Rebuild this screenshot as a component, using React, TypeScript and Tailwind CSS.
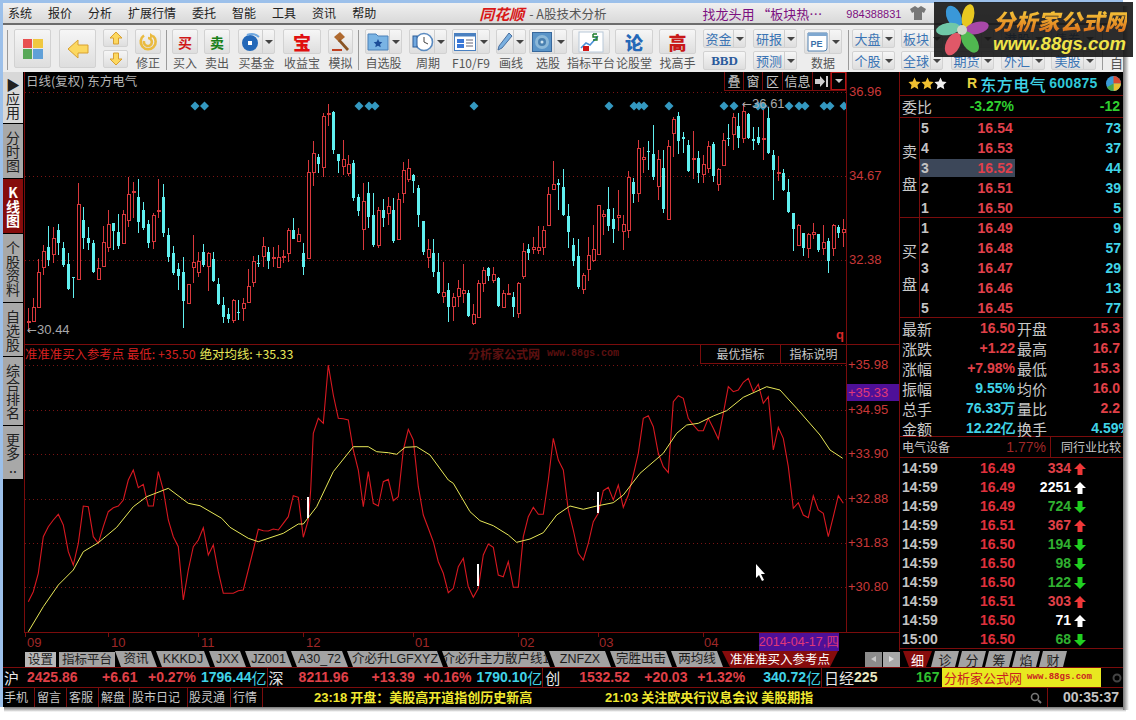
import type { ReactNode } from 'react'

// y values are taken at 3x, x is fixed at 5px per bar: [red?, high, bodyTop, bodyBottom, low]
const candles: number[][] = [
  [1,715,752,756,785],[1,685,712,752,755],[1,568,606,710,712],[1,525,543,590,615],[0,468,532,570,588],[1,470,505,552,580],[0,462,480,518,555],[0,515,535,585,590],[0,550,582,658,660],[0,620,622,625,684],
  [1,340,403,626,628],[0,410,450,505,537],[0,470,505,518,540],[0,510,518,605,610],[1,565,595,628,630],[1,468,517,587,590],[1,420,462,530,545],[0,460,460,482,540],[0,432,487,528,538],[1,420,432,518,520],
  [1,322,373,450,470],[1,335,362,366,445],[0,328,382,455,490],[0,397,420,475,480],[0,450,462,518,535],[1,428,435,512,537],[1,328,420,423,445],[0,343,382,488,500],[0,475,495,560,575],[0,527,550,608,615],
  [0,580,598,618,660],[0,560,606,692,775],[1,642,642,698,700],[1,495,577,590,640],[1,545,572,605,620],[0,522,547,585,590],[1,545,550,587,662],[0,545,568,633,635],[0,625,642,702,705],[0,680,706,740,758],
  [0,715,732,746,758],[1,688,690,750,758],[0,690,725,727,750],[1,685,700,715,752],[1,598,648,695,697],[1,558,573,635,652],[0,555,578,580,590],[1,502,528,557,590],[0,530,545,572,598],[1,530,560,562,590],
  [1,525,562,592,595],[1,540,558,560,578],[1,475,480,548,575],[0,445,480,506,508],[1,475,492,513,515],[0,520,549,590,614],[1,270,306,565,568],[1,212,250,305,347],[0,252,262,282,308],[1,130,138,290,322],
  [1,102,130,133,168],[0,122,125,240,252],[0,252,252,272,308],[1,210,267,288,315],[1,255,282,310,318],[0,270,280,385,392],[0,372,382,422,437],[1,340,393,476,540],[0,337,370,440,475],[0,370,435,525,530],
  [1,410,420,525,535],[0,388,420,443,470],[1,382,408,428,465],[0,385,420,512,520],[1,370,388,507,510],[1,276,300,368,398],[1,268,295,328,335],[0,313,315,332,368],[0,345,353,435,470],[0,453,454,545,555],
  [1,508,538,560,595],[0,508,548,606,620],[0,550,606,668,672],[1,575,666,678,700],[0,640,660,710,755],
  [1,670,680,708,752],[1,630,655,678,712],[1,583,660,668,700],[0,660,670,738,740],[1,703,733,760,766],[1,630,640,740,742],[1,590,600,638,665],[0,590,595,618,632],[1,590,613,630,640],[0,622,625,708,710],
  [1,660,670,712,714],[1,642,670,672,675],[0,665,682,710,740],[1,635,638,728,743],[1,518,542,618,626],[0,522,538,548,570],[1,500,532,538,552],[1,468,532,540,552],[1,468,480,530,555],[1,350,373,464,466],
  [1,272,342,358,360],[0,328,340,346,420],[0,297,352,435,437],[0,402,438,485,535],[0,505,525,572,588],[0,507,558,652,656],[1,610,615,656,672],[1,500,556,596,632],[1,465,538,570,575],[1,405,405,553,555],
  [1,420,432,437,495],[0,352,418,468,482],[0,415,447,476,518],[1,360,436,442,482],[1,435,463,482,540],[1,302,320,480,503],[0,325,336,372,400],[1,210,235,370,395],[1,232,260,268,310],[0,213,243,245,300],
  [0,165,252,322,330],[1,240,268,347,390],[0,240,293,417,428],[1,210,228,447,450],[1,140,148,190,262],[0,125,138,212,252],[0,187,202,208,250],[0,210,225,302,306],[1,183,265,268,328],[0,243,265,310,338],
  [1,255,282,312,338],[1,212,228,295,310],[0,215,222,318,335],[1,295,297,343,362],[1,190,210,284,286],[0,163,203,205,228],[1,130,140,192,240],[0,130,168,203,235],[1,100,123,203,218],[0,130,133,205,208],
  [0,170,208,214,240],[0,172,202,218,225],[1,110,205,208,270],[0,110,145,250,252],[0,240,255,300,390],[1,258,305,310,332],[0,297,310,360,362],[0,328,366,425,428],[0,430,430,478,542],[1,462,465,524,526],
  [0,490,490,533,558],[1,490,492,533,563],[1,460,487,491,506],[0,492,492,540,545],[1,465,515,535,555],[0,503,513,572,610],[1,462,464,535,557],[0,465,472,488,505],[1,447,478,485,530],
]

const diamonds = [195, 204.5, 359, 369, 375, 474, 609, 634, 639, 644, 669, 724, 734, 758, 763, 789, 799, 805, 824, 830, 844]

const redA = [85,785,100,755,115,700,130,590,145,560,160,540,175,523,190,555,205,635,220,675,235,610,250,498,265,500,280,590,295,610,310,560,325,515,340,503,355,498,370,480,385,420,400,390,415,443,430,433,445,498,460,498,475,395,490,450,505,540,520,590,535,620,550,780,565,690,580,620,595,600,610,563,625,645,640,615,655,695,670,760,685,760,700,760,715,752,730,750,745,690,760,630,775,568,790,572,805,573,820,567,835,570,850,550,865,530,880,467,895,472,910,592,925,540,932,450,940,280,955,235,970,250,985,75,1000,165,1015,235,1030,236,1045,240,1060,330,1075,390,1090,500,1105,395,1120,490,1135,498,1150,425,1165,418,1180,482,1195,470,1210,330,1225,268,1240,300,1255,440,1270,525,1285,565,1300,605,1315,665,1330,700,1345,758]
const redB = [10,745,25,680,40,655,55,740,70,772,85,745,100,645,115,612,130,622,145,705,160,710,175,665,190,742,205,742,220,590,235,530,250,502,265,523,280,523,295,420,310,295,325,360,340,390,355,510,370,570,385,640,400,660,415,610,430,545,445,520,460,452,475,442,490,480,505,435,520,502,535,465,550,405,565,340,580,235,595,227,610,260,625,340,640,380,655,398,670,185,685,167,700,175,715,235,730,255,745,272,760,272,775,235,790,265,805,297,820,220,835,140,850,155,865,150,880,127,895,115,910,155,925,133,940,190,955,170,970,330,985,262,1000,295,1015,380,1030,505,1045,488,1060,525,1075,533,1090,467,1105,510,1120,520,1135,590,1150,530,1165,467,1180,490]
const yellowA = [85,875,130,800,175,735,220,690,250,635,295,608,350,562,400,500,440,470,505,445,565,490,600,497,665,535,690,562,745,595,775,605,850,580,895,552,910,552,950,500,1000,395,1060,320,1105,320,1130,335,1165,338,1190,343,1215,322,1250,320,1290,345,1345,420]
const yellowB = [10,430,60,515,90,542,130,557,175,585,200,607,240,597,280,578,320,525,360,498,400,508,440,498,490,488,520,465,570,400,640,340,680,280,710,255,745,250,790,228,830,212,880,172,950,140,990,150,1040,205,1110,285,1140,330,1178,355]

function toPoints(a: number[], b: number[]) {
  const out: string[] = []
  for (let i = 0; i < a.length; i += 2) out.push(`${(a[i] / 3).toFixed(1)},${(340 + a[i + 1] / 3).toFixed(1)}`)
  for (let i = 0; i < b.length; i += 2) out.push(`${(450 + b[i] / 3).toFixed(1)},${(340 + b[i + 1] / 3).toFixed(1)}`)
  return out.join(' ')
}

const cjk = "font-['Noto_Sans_CJK_SC',sans-serif]"
const num = "font-['Liberation_Sans',sans-serif] font-bold text-[14px]"
const tabFont = "font-['Liberation_Sans','Noto_Sans_CJK_SC',sans-serif] text-[12.5px]"

function Handle({ className }: { className: string }) {
  return <div className={`h-[40px] w-[2px] mt-[1px] shrink-0 border-l border-[#9a9a9a] border-r-white ${className}`} />
}

function IconBox({ children, dropdown, className = '' }: { children: ReactNode; dropdown?: boolean; className?: string }) {
  return (
    <div className={`flex w-full items-center rounded-[2px] border border-[#d2d2d2] bg-gradient-to-b from-[#f6f6f6] to-[#dedede] ${className}`}>
      <div className="flex h-full flex-1 items-center justify-center">{children}</div>
      {dropdown && (
        <div className="flex h-full w-[12px] shrink-0 items-center justify-center border-l border-[#cfcfcf]">
          <div className="h-0 w-0 border-x-[4px] border-t-[4px] border-x-transparent border-t-[#444]" />
        </div>
      )}
    </div>
  )
}

function ToolBtn({ className, label, children, dropdown }: { className: string; label: string; children: ReactNode; dropdown?: boolean }) {
  return (
    <div className={`flex shrink-0 flex-col items-center ${className}`}>
      <IconBox dropdown={dropdown} className="h-[25px]">{children}</IconBox>
      <div className="mt-[1px] whitespace-nowrap text-[12px] leading-[16px] text-[#555]">{label}</div>
    </div>
  )
}

function SmallBtn({ text, dropdown = true }: { text: string; dropdown?: boolean }) {
  return (
    <IconBox dropdown={dropdown} className="h-[19px]">
      <span className="whitespace-nowrap text-[13px] leading-none text-[#3a74b4]">{text}</span>
    </IconBox>
  )
}

function SmallCol({ className, top, bottom }: { className: string; top: string; bottom: string }) {
  return (
    <div className={`flex shrink-0 flex-col gap-[3px] ${className}`}>
      <SmallBtn text={top} />
      <SmallBtn text={bottom} />
    </div>
  )
}

function SideTab({ chars, className }: { chars: string[]; className: string }) {
  return (
    <div className={`mb-[1px] flex w-[20px] flex-col items-center justify-center text-[14px] leading-[14px] ${className}`}>
      {chars.map((c, i) => (
        <span key={i}>{c}</span>
      ))}
    </div>
  )
}

function BottomTab({ text, className }: { text: string; className: string }) {
  return (
    <div className={`flex h-[16px] shrink-0 items-center justify-center whitespace-nowrap bg-[#a3a3a3] leading-none text-[#1c1c1c] [clip-path:polygon(0_0,calc(100%-6px)_0,100%_100%,6px_100%)] ${tabFont} ${className}`}>
      {text}
    </div>
  )
}

function ArrowMark({ up, color }: { up: boolean; color: string }) {
  return (
    <svg width="12" height="12" viewBox="0 0 12 12" className="ml-[3px] shrink-0">
      <path d={up ? 'M6 0L12 6H8.5V12H3.5V6H0Z' : 'M6 12L12 6H8.5V0H3.5V6H0Z'} fill={color} />
    </svg>
  )
}

function Star({ color }: { color: string }) {
  return (
    <svg width="13" height="13" viewBox="0 0 24 24">
      <path d="M12 1l3.4 7.2 7.8 1-5.7 5.4 1.5 7.8L12 18.6 5 22.4l1.5-7.8L.8 9.2l7.8-1z" fill={color} />
    </svg>
  )
}

const sells = [
  ['5', '16.54', '73'],
  ['4', '16.53', '37'],
  ['3', '16.52', '44'],
  ['2', '16.51', '39'],
  ['1', '16.50', '5'],
]
const buys = [
  ['1', '16.49', '9'],
  ['2', '16.48', '57'],
  ['3', '16.47', '29'],
  ['4', '16.46', '13'],
  ['5', '16.45', '77'],
]

const stats = [
  ['最新', '16.50', 'text-[#e04048]', '开盘', '15.3', 'text-[#e04048]'],
  ['涨跌', '+1.22', 'text-[#e04048]', '最高', '16.7', 'text-[#e04048]'],
  ['涨幅', '+7.98%', 'text-[#e04048]', '最低', '15.3', 'text-[#e04048]'],
  ['振幅', '9.55%', 'text-[#40d4e8]', '均价', '16.0', 'text-[#e04048]'],
  ['总手', '76.33万', 'text-[#40d4e8]', '量比', '2.2', 'text-[#e04048]'],
  ['金额', '12.22亿', 'text-[#40d4e8]', '换手', '4.59%', 'text-[#40d4e8]'],
]

const ticks = [
  ['14:59', '16.49', '334', 'r'],
  ['14:59', '16.49', '2251', 'w'],
  ['14:59', '16.49', '724', 'g'],
  ['14:59', '16.51', '367', 'r'],
  ['14:59', '16.50', '194', 'g'],
  ['14:59', '16.50', '98', 'g'],
  ['14:59', '16.50', '122', 'g'],
  ['14:59', '16.51', '303', 'r'],
  ['14:59', '16.50', '71', 'w'],
  ['15:00', '16.50', '68', 'g'],
]

function DepthBlock({ label, rows, highlight }: { label: string[]; rows: string[][]; highlight?: number }) {
  return (
    <div className="flex h-[100px] border-b border-[#7a0c0c]">
      <div className="flex w-[20px] shrink-0 flex-col items-center justify-center gap-[17px] border-r border-[#7a0c0c] text-[15px] leading-[16px] text-[#c8c8c8]">
        {label.map((c) => (
          <span key={c}>{c}</span>
        ))}
      </div>
      <div className="flex flex-1 flex-col">
        {rows.map((r, i) => (
          <div key={i} className="flex h-[20px] items-center">
            <div className={`flex h-[18px] w-[95px] items-center justify-between pl-[1px] pr-[2px] ${i === highlight ? 'bg-[#3c4759]' : ''}`}>
              <span className={`${num} text-[#c4c4c4]`}>{r[0]}</span>
              <span className={`${num} tracking-[0.1px] text-[#e0404c]`}>{r[1]}</span>
            </div>
            <span className={`${num} ml-auto mr-[2px] text-[#40d4e8]`}>{r[2]}</span>
          </div>
        ))}
      </div>
    </div>
  )
}

export default function App() {
  return (
    <div className={`relative h-[720px] w-[1136px] overflow-hidden bg-white ${cjk}`}>
      <div className="relative flex h-[707px] w-[1123px] flex-col overflow-hidden border-l-[3px] border-t-[3px] border-[#9cc0ea] bg-black">
        {/* menu bar */}
        <div className="flex h-[22px] shrink-0 items-start border-b-2 border-[#6c6c6c] bg-gradient-to-b from-[#f0f0f0] to-[#d9d9d9] pl-[5px] pt-[2px]">
          <div className="flex gap-[16px] text-[12px] leading-[16px] text-[#222]">
            {['系统', '报价', '分析', '扩展行情', '委托', '智能', '工具', '资讯', '帮助'].map((m) => (
              <span key={m}>{m}</span>
            ))}
          </div>
          <div className="ml-[103px] text-[15px] font-bold italic leading-[17px] text-[#d81818]">同花顺</div>
          <div className="ml-[5px] text-[12.5px] leading-[17px] text-[#555]">- A股技术分析</div>
          <div className="ml-[96px] text-[13px] leading-[17px] text-[#7c1080]">找龙头用 “板块热…</div>
          <div className="ml-[24px] font-['Liberation_Sans',sans-serif] text-[11px] leading-[18px] text-[#7c1080]">984388831</div>
          <svg width="16" height="14" viewBox="0 0 16 14" className="ml-[9px] mt-[1px]">
            <path d="M5 0L0 3l2 4 2-1v8h8V6l2 1 2-4-5-3-3 2z" fill="#777" />
          </svg>
        </div>

        {/* toolbar */}
        <div className="flex h-[47px] shrink-0 items-start overflow-hidden bg-[#ededed] pt-[4px]">
          <Handle className="ml-[4px]" />
          <div className="ml-[5px] flex h-[39px] w-[37px] shrink-0">
            <IconBox className="h-full">
              <div className="grid h-[20px] w-[20px] grid-cols-2 gap-px">
                <div className="bg-[#e85050]" />
                <div className="bg-[#f0c840]" />
                <div className="bg-[#58a858]" />
                <div className="bg-[#60a0d8]" />
              </div>
            </IconBox>
          </div>
          <div className="ml-[8px] flex h-[39px] w-[37px] shrink-0">
            <IconBox className="h-full">
              <svg width="22" height="20" viewBox="0 0 22 20">
                <path d="M1 10L11 1v5h10v8H11v5z" fill="#fcd860" stroke="#d8a030" />
              </svg>
            </IconBox>
          </div>
          <div className="ml-[7px] flex w-[25px] shrink-0 flex-col gap-[3px]">
            <IconBox className="h-[18px]">
              <svg width="14" height="14" viewBox="0 0 14 14"><path d="M7 1l6 6H9.5v6h-5V7H1z" fill="#fcd860" stroke="#d8a030" /></svg>
            </IconBox>
            <IconBox className="h-[18px]">
              <svg width="14" height="14" viewBox="0 0 14 14"><path d="M7 13L1 7h3.5V1h5v6H13z" fill="#fcd860" stroke="#d8a030" /></svg>
            </IconBox>
          </div>
          <ToolBtn className="ml-[7px] w-[26px]" label="修正">
            <svg width="20" height="20" viewBox="0 0 20 20">
              <path d="M6 3.5A7.5 7.5 0 1 0 15 4M10 6a4 4 0 1 1-4 3" fill="none" stroke="#eabb40" strokeWidth="2.6" />
              <path d="M12 1l4 3-4 3z" fill="#eabb40" />
            </svg>
          </ToolBtn>
          <Handle className="ml-[5px]" />
          <ToolBtn className="ml-[4px] w-[26px]" label="买入">
            <span className="text-[14px] font-bold leading-none text-[#d01818]">买</span>
          </ToolBtn>
          <ToolBtn className="ml-[6px] w-[26px]" label="卖出">
            <span className="text-[14px] font-bold leading-none text-[#188018]">卖</span>
          </ToolBtn>
          <ToolBtn className="ml-[8px] w-[37px]" label="买基金" dropdown>
            <svg width="20" height="20" viewBox="0 0 20 20">
              <circle cx="9" cy="11" r="8" fill="#2468b8" />
              <path d="M6 3a10 8 0 0 1 12 2" fill="none" stroke="#70a8e0" strokeWidth="2" />
              <rect x="7" y="9" width="4" height="4" fill="#fff" />
            </svg>
          </ToolBtn>
          <ToolBtn className="ml-[8px] w-[38px]" label="收益宝">
            <span className="text-[18px] font-black leading-none text-[#e01010]">宝</span>
          </ToolBtn>
          <ToolBtn className="ml-[7px] w-[25px]" label="模拟">
            <svg width="20" height="22" viewBox="0 0 20 22">
              <path d="M3 6l6-5 5 5-6 5z" fill="#b06a30" />
              <path d="M9 8l9 10-2 2L7 10z" fill="#8a5424" />
              <rect x="1" y="18" width="10" height="2" fill="#c04020" />
            </svg>
          </ToolBtn>
          <Handle className="ml-[5px]" />
          <ToolBtn className="ml-[5px] w-[37px]" label="自选股" dropdown>
            <svg width="22" height="19" viewBox="0 0 22 19">
              <path d="M1 2h8l2 2h10v14H1z" fill="#7ab4e4" stroke="#4a80b8" />
              <path d="M11 7l1.3 2.8 3 .4-2.2 2 .6 3-2.7-1.5-2.7 1.5.6-3-2.2-2 3-.4z" fill="#1c4c98" />
            </svg>
          </ToolBtn>
          <ToolBtn className="ml-[7px] w-[38px]" label="周期" dropdown>
            <svg width="23" height="20" viewBox="0 0 23 20">
              <circle cx="13" cy="10" r="8.5" fill="#fff" stroke="#5a8ac0" strokeWidth="1.6" />
              <path d="M13 5v5l4 2" fill="none" stroke="#444" />
              <rect x="2" y="4" width="4" height="11" fill="#70a8e0" stroke="#2c5c98" />
            </svg>
          </ToolBtn>
          <ToolBtn className="ml-[5px] w-[38px]" label="F10/F9" dropdown>
            <svg width="22" height="18" viewBox="0 0 22 18">
              <rect x="0.5" y="0.5" width="21" height="17" fill="#fff" stroke="#4a80c0" />
              <rect x="0.5" y="0.5" width="21" height="3" fill="#4a80c0" />
              <rect x="3" y="6" width="7" height="4" fill="#3a78d8" />
              <rect x="3" y="11" width="7" height="4" fill="#3a78d8" />
              <path d="M12 7h7M12 10h7M12 13h7" stroke="#667" />
            </svg>
          </ToolBtn>
          <ToolBtn className="ml-[6px] w-[30px]" label="画线" dropdown>
            <svg width="16" height="20" viewBox="0 0 16 20">
              <path d="M12 1l3 3L5 16l-4 2 1-4z" fill="#7ab0e0" stroke="#4a70a0" />
            </svg>
          </ToolBtn>
          <ToolBtn className="ml-[3px] w-[38px]" label="选股" dropdown>
            <svg width="20" height="20" viewBox="0 0 20 20">
              <rect x="0.5" y="0.5" width="19" height="19" fill="#5a94c8" stroke="#38689c" />
              <circle cx="10" cy="10" r="7" fill="#8cb8d8" />
              <circle cx="10" cy="10" r="4" fill="#4a80b0" />
              <circle cx="10" cy="10" r="1.5" fill="#d0e4f0" />
            </svg>
          </ToolBtn>
          <ToolBtn className="ml-[5px] w-[38px]" label="指标平台">
            <svg width="26" height="22" viewBox="0 0 26 22">
              <rect x="1" y="1" width="24" height="20" fill="#fff" stroke="#b8c8d8" />
              <path d="M3 17l5-5 4 2 8-9" fill="none" stroke="#4a90d8" strokeWidth="1.6" />
              <path d="M15 3h4M15 3v3h4v3h-4" fill="none" stroke="#1c7c2c" strokeWidth="1.4" />
              <rect x="5" y="15" width="6" height="5" fill="#d01818" />
            </svg>
          </ToolBtn>
          <ToolBtn className="ml-[5px] w-[38px]" label="论股堂">
            <span className="text-[18px] font-black leading-[22px] text-[#2468b8]">论</span>
          </ToolBtn>
          <ToolBtn className="ml-[6px] w-[37px]" label="找高手">
            <span className="text-[18px] font-black leading-[22px] text-[#c81818]">高</span>
          </ToolBtn>
          <div className="ml-[7px] flex w-[43px] shrink-0 flex-col gap-[3px]">
            <SmallBtn text="资金" />
            <IconBox className="h-[19px]">
              <span className="font-['Liberation_Serif',serif] text-[13px] font-bold leading-none text-[#2a5a9c]">BBD</span>
            </IconBox>
          </div>
          <SmallCol className="ml-[7px] w-[44px]" top="研报" bottom="预测" />
          <ToolBtn className="ml-[7px] w-[38px]" label="数据" dropdown>
            <svg width="21" height="20" viewBox="0 0 21 20">
              <path d="M1 1h19v15a3 3 0 0 1-3 3H1z" fill="#fff" stroke="#5080b0" />
              <rect x="1" y="1" width="19" height="3" fill="#80a8d0" />
              <text x="3.5" y="15" fontSize="9" fontWeight="bold" fontFamily="Liberation Sans" fill="#3a70a8">PE</text>
            </svg>
          </ToolBtn>
          <Handle className="ml-[6px]" />
          <SmallCol className="ml-[2px] w-[43px]" top="大盘" bottom="个股" />
          <SmallCol className="ml-[6px] w-[42px]" top="板块" bottom="全球" />
          <SmallCol className="ml-[8px] w-[43px]" top="" bottom="期货" />
          <SmallCol className="ml-[7px] w-[44px]" top="港股" bottom="外汇" />
          <SmallCol className="ml-[6px] w-[45px]" top="债券" bottom="美股" />
          <Handle className="ml-[6px]" />
          <div className="ml-[6px] mt-[26px] text-[13px] leading-[16px] text-[#555]">自</div>
        </div>

        {/* main */}
        <div className="flex h-[579px] shrink-0">
          <div className="flex w-[21px] shrink-0 flex-col bg-black">
            <SideTab chars={['▶', '应', '用']} className="h-[51px] bg-[#d8d8d8] text-[#222]" />
            <SideTab chars={['分', '时', '图']} className="h-[54px] bg-[#a8a8a8] text-[#222]" />
            <SideTab chars={['K', '线', '图']} className="h-[54px] bg-[#860c0c] font-bold text-white" />
            <SideTab chars={['个', '股', '资', '料']} className="h-[68px] bg-[#a8a8a8] text-[#222]" />
            <SideTab chars={['自', '选', '股']} className="h-[53px] bg-[#a8a8a8] text-[#222]" />
            <SideTab chars={['综', '合', '排', '名']} className="h-[68px] bg-[#a8a8a8] text-[#222]" />
            <SideTab chars={['更', '多', '..']} className="h-[53px] bg-[#a8a8a8] text-[#222]" />
          </div>

          <div className="flex w-[875px] shrink-0 flex-col">
            {/* upper panel */}
            <div className="flex h-[273px] shrink-0 border-b border-[#7a0c0c]">
              <div className="relative w-[823px] shrink-0 border-x border-[#7a0c0c]">
                <svg className="absolute inset-0 h-full w-full" viewBox="25 72 821 272" shapeRendering="crispEdges">
                  {[92.5, 176.5, 260.5].map((y) => (
                    <line key={y} x1="25" x2="846" y1={y} y2={y} stroke="#7a1414" strokeDasharray="1 3" />
                  ))}
                  {candles.map((c, i) => {
                    const x = 28 + 5 * i
                    const [hi, top, bot, lo] = c.slice(1).map((v) => Math.round(70 + v / 3))
                    const color = c[0] ? '#d8383c' : '#60f0f0'
                    return (
                      <g key={i}>
                        <rect x={x} y={hi} width="1" height={Math.max(lo - hi, 1)} fill={color} />
                        <rect x={x - 1} y={top} width="3" height={Math.max(bot - top, 1)} fill={c[0] ? '#000' : color} />
                        {c[0] === 1 && (
                          <rect x={x - 1} y={top} width="3" height={Math.max(bot - top, 1)} fill="none" stroke={color} strokeWidth="1" />
                        )}
                      </g>
                    )
                  })}
                </svg>
                <svg className="absolute inset-0 h-full w-full" viewBox="25 72 821 272">
                  {diamonds.map((x) => (
                    <path key={x} d={`M${x} 101.5l4.5 4.5-4.5 4.5-4.5-4.5z`} fill="#3498c0" />
                  ))}
                </svg>
                <div className="absolute left-[1px] top-[1px] text-[12.5px] leading-[16px] text-[#b4b4b4]">日线(复权) 东方电气</div>
                <div className="absolute left-[2px] top-[250px] font-['DejaVu_Sans',sans-serif] text-[12px] leading-[16px] text-[#a8a8a8]">←<span className="font-['Liberation_Sans',sans-serif] text-[13px]">30.44</span></div>
                <div className="absolute left-[717px] top-[24px] font-['DejaVu_Sans',sans-serif] text-[12px] leading-[16px] text-[#a8a8a8]">←<span className="font-['Liberation_Sans',sans-serif] text-[13px]">36.61</span></div>
                <div className="absolute right-[2px] top-[256px] font-['Liberation_Sans',sans-serif] text-[13px] font-bold leading-[14px] text-[#d82828]">q</div>
                <div className="absolute right-0 top-0 flex h-[19px] items-stretch border-b border-l border-[#7a0c0c] text-[13px] leading-[18px] text-[#c8c8c8]">
                  <span className="w-[19px] border-r border-[#7a0c0c] text-center">叠</span>
                  <span className="w-[19px] border-r border-[#7a0c0c] text-center">窗</span>
                  <span className="w-[20px] border-r border-[#7a0c0c] text-center">区</span>
                  <span className="w-[30px] border-r border-[#7a0c0c] text-center">信息</span>
                  <span className="flex w-[18px] items-center justify-center border-r border-[#7a0c0c]">
                    <svg width="13" height="11" viewBox="0 0 13 11"><path d="M0 3h5V0l5 5.5L5 11V8H0zM11 0h2v11h-2z" fill="#ccc" /></svg>
                  </span>
                  <span className="flex w-[15px] items-center justify-center border border-[#b01414]">
                    <span className="h-0 w-0 border-x-[4px] border-t-[4px] border-x-transparent border-t-[#ccc]" />
                  </span>
                </div>
              </div>
              <div className="flex w-[52px] flex-col font-['Liberation_Sans',sans-serif] text-[13px] leading-[14px] text-[#c83838]">
                <span className="ml-[2px] mt-[13px]">36.96</span>
                <span className="ml-[2px] mt-[70px]">34.67</span>
                <span className="ml-[2px] mt-[70px]">32.38</span>
              </div>
            </div>

            {/* lower panel */}
            <div className="flex h-[288px] shrink-0 border-b border-[#7a0c0c]">
              <div className="relative w-[823px] shrink-0 border-x border-[#7a0c0c]">
                <svg className="absolute inset-0 h-full w-full" viewBox="25 345 821 287">
                  {[365.5, 410.5, 454.5, 499.5, 543.5, 587.5].map((y) => (
                    <line key={y} x1="25" x2="846" y1={y} y2={y} stroke="#7a1414" strokeDasharray="1 3" />
                  ))}
                  <polyline points={toPoints(redA, redB)} fill="none" stroke="#d81820" strokeWidth="1.1" />
                  <polyline points={toPoints(yellowA, yellowB)} fill="none" stroke="#e8e858" strokeWidth="1" />
                  <rect x="307" y="497" width="2" height="21" fill="#fff" />
                  <rect x="477" y="564" width="2" height="22" fill="#fff" />
                  <rect x="597" y="492" width="2" height="21" fill="#fff" />
                  <path d="M756 564v14l3-3 3 6 2-1-3-6h4z" fill="#fff" />
                </svg>
                <div className="absolute left-0 top-[1px] flex whitespace-nowrap text-[12.4px] leading-[16px]">
                  <span className="text-[#d82020]">准准准买入参考点 最低: +35.50</span>
                  <span className="ml-[4px] text-[#e8e858]">绝对均线: +35.33</span>
                </div>
                <div className="absolute left-[443px] top-[1px] flex items-center whitespace-nowrap text-[12px] font-bold leading-[16px] text-[#5c1010]">
                  分析家公式网
                  <span className="ml-[7px] font-['Liberation_Mono',monospace] text-[10px]">www.88gs.com</span>
                </div>
                <div className="absolute right-0 top-0 flex h-[19px] border-b border-l border-[#7a0c0c] text-[12px] leading-[18px] text-[#c8c8c8]">
                  <span className="w-[80px] border-r border-[#7a0c0c] text-center">最优指标</span>
                  <span className="w-[65px] text-center">指标说明</span>
                </div>
              </div>
              <div className="relative w-[52px] font-['Liberation_Sans',sans-serif] text-[13px] leading-[14px] text-[#c83838]">
                <div className="flex flex-col">
                  <span className="ml-[1px] mt-[13px]">+35.98</span>
                  <span className="ml-[1px] mt-[31px]">+34.95</span>
                  <span className="ml-[1px] mt-[30px]">+33.90</span>
                  <span className="ml-[1px] mt-[31px]">+32.88</span>
                  <span className="ml-[1px] mt-[30px]">+31.83</span>
                  <span className="ml-[1px] mt-[30px]">+30.80</span>
                </div>
                <div className="absolute left-0 top-[39px] h-[17px] w-full bg-[#4e1098] pl-[1px] leading-[17px] text-[#e03878]">+35.33</div>
              </div>
            </div>

            {/* time axis */}
            <div className="relative flex h-[18px] shrink-0 items-center font-['Liberation_Sans',sans-serif] text-[13px] leading-none text-[#a02828]">
              <svg className="absolute left-0 top-0 h-[4px] w-[823px]" viewBox="24 0 823 4" shapeRendering="crispEdges">
                {[25, 108, 198, 303, 413, 518, 598, 703].map((x) => (
                  <line key={x} x1={x + 0.5} x2={x + 0.5} y1="0" y2="4" stroke="#7a0c0c" />
                ))}
              </svg>
              <span className="ml-[3px] w-[84px]">09</span>
              <span className="w-[90px]">10</span>
              <span className="w-[105px]">11</span>
              <span className="w-[109px]">12</span>
              <span className="w-[105px]">01</span>
              <span className="w-[79px]">02</span>
              <span className="w-[105px]">03</span>
              <span>04</span>
              <div className="absolute left-[735px] top-0 flex h-[18px] w-[80px] items-center justify-center whitespace-nowrap bg-[#4e1098] text-[12.5px] text-[#e03878]">
                2014-04-17,四
              </div>
            </div>
          </div>

          {/* right panel */}
          <div className="flex w-[224px] shrink-0 flex-col overflow-hidden border-l border-[#7a0c0c]">
            <div className="flex h-[24px] shrink-0 items-center border-b border-[#7a0c0c] pl-[8px]">
              <Star color="#f0c030" />
              <Star color="#f0c030" />
              <Star color="#f0f0f0" />
              <span className="ml-[20px] font-['Liberation_Sans',sans-serif] text-[14px] font-bold text-[#e8d040]">R</span>
              <span className="ml-[3px] text-[16px] font-medium leading-none tracking-[0.5px] text-[#40d4e8]">东方电气</span>
              <span className={`${num} ml-[3px] tracking-[0.3px] text-[#30c8d8]`}>600875</span>
              <svg width="15" height="15" viewBox="0 0 16 16" className="ml-[8px]">
                <circle cx="8" cy="8" r="8" fill="#3a9ad8" />
                <path d="M8 8V0a8 8 0 0 1 8 8z" fill="#d84830" />
                <path d="M8 8h8a8 8 0 0 1-8 8z" fill="#e8c030" />
                <path d="M8 8v8a8 8 0 0 1-7-4z" fill="#48a848" />
              </svg>
            </div>
            <div className="flex h-[22px] shrink-0 items-center border-b border-[#7a0c0c]">
              <span className="ml-[2px] w-[54px] text-[15px] leading-none text-[#c8c8c8]">委比</span>
              <span className={`${num} w-[58px] text-right text-[#30d030]`}>-3.27%</span>
              <span className={`${num} ml-auto mr-[3px] text-[#30d030]`}>-12</span>
            </div>
            <DepthBlock label={['卖', '盘']} rows={sells} highlight={2} />
            <DepthBlock label={['买', '盘']} rows={buys} />
            <div className="flex h-[119px] shrink-0 flex-col border-b border-[#7a0c0c]">
              {stats.map((s, i) => (
                <div key={i} className="flex h-[20px] items-center whitespace-nowrap">
                  <span className="ml-[2px] w-[32px] text-[15px] leading-none text-[#c8c8c8]">{s[0]}</span>
                  <span className={`${num} ${s[2]} w-[81px] text-right`}>{s[1]}</span>
                  <span className="ml-[2px] w-[34px] text-[15px] leading-none text-[#c8c8c8]">{s[3]}</span>
                  <span className={`${num} ${s[5]} ml-auto ${i === 5 ? '-mr-[8px]' : 'mr-[3px]'}`}>{s[4]}</span>
                </div>
              ))}
            </div>
            <div className="flex h-[21px] shrink-0 items-center border-b border-[#7a0c0c]">
              <span className="ml-[2px] w-[53px] text-[12px] text-[#c8c8c8]">电气设备</span>
              <span className={`${num} w-[91px] text-right font-normal text-[#a02828]`}>1.77%</span>
              <span className="ml-[4px] flex h-full flex-1 items-center border-l border-[#7a0c0c] pl-[10px] text-[12px] text-[#c8c8c8]">同行业比较</span>
            </div>
            <div className="flex h-[191px] shrink-0 flex-col border-b border-[#7a0c0c] pt-px">
              {ticks.map((t, i) => (
                <div key={i} className="flex h-[19px] shrink-0 items-center">
                  <span className={`${num} ml-[2px] w-[40px] text-[#c4c4c4]`}>{t[0]}</span>
                  <span className={`${num} w-[73px] text-right text-[#e0303c]`}>{t[1]}</span>
                  <span className={`${num} w-[56px] text-right ${t[3] === 'r' ? 'text-[#e04048]' : t[3] === 'g' ? 'text-[#30b030]' : 'text-white'}`}>{t[2]}</span>
                  <ArrowMark up={t[3] !== 'g'} color={t[3] === 'r' ? '#f03838' : t[3] === 'g' ? '#20d020' : '#ffffff'} />
                </div>
              ))}
            </div>
          </div>
        </div>

        {/* bottom tabs */}
        <div className="flex h-[16px] shrink-0 items-center overflow-hidden pl-[22px]">
          <div className="flex h-[15px] w-[31px] shrink-0 items-center justify-center bg-[#b8b8b8] text-[12.5px] leading-none text-[#222]">设置</div>
          <div className="ml-[3px] flex h-[15px] w-[56px] shrink-0 items-center justify-center bg-[#a3a3a3] text-[12.5px] leading-none text-[#222]">指标平台</div>
          <BottomTab text="资讯" className="w-[42px]" />
          <BottomTab text="KKKDJ" className="-ml-px w-[54px]" />
          <BottomTab text="JXX" className="-ml-px w-[37px]" />
          <BottomTab text="JZ001" className="-ml-px w-[47px]" />
          <BottomTab text="A30_72" className="-ml-px w-[57px]" />
          <BottomTab text="介必升LGFXYZ" className="-ml-px w-[96px]" />
          <BottomTab text="介必升主力散户线1" className="-ml-px w-[108px]" />
          <BottomTab text="ZNFZX" className="-ml-px w-[62px]" />
          <BottomTab text="完胜出击" className="-ml-px w-[62px]" />
          <BottomTab text="两均线" className="-ml-px w-[52px]" />
          <div className="-ml-px flex h-[16px] w-[116px] shrink-0 items-center justify-center whitespace-nowrap bg-[#860c0c] text-[12.5px] leading-none text-white [clip-path:polygon(0_0,100%_0,calc(100%-8px)_100%,8px_100%)]">
            准准准买入参考点
          </div>
          <div className="ml-[27px] flex h-[15px] w-[17px] shrink-0 items-center justify-center bg-[#8c8c8c]">
            <div className="h-0 w-0 border-y-[3px] border-r-[5px] border-y-transparent border-r-[#c8c8c8]" />
          </div>
          <div className="ml-px flex h-[15px] w-[17px] shrink-0 items-center justify-center bg-[#a8a8a8]">
            <div className="h-0 w-0 border-y-[3px] border-l-[5px] border-y-transparent border-l-[#e0e0e0]" />
          </div>
          <div className="ml-[3px] flex h-[16px] w-[29px] shrink-0 items-center justify-center bg-[#860c0c] text-[13px] leading-none text-white [clip-path:polygon(0_0,100%_0,calc(100%-6px)_100%,6px_100%)]">细</div>
          {['诊', '分', '筹', '焰', '财'].map((t) => (
            <div key={t} className="-ml-[1px] flex h-[16px] w-[28px] shrink-0 items-center justify-center bg-[#a3a3a3] text-[13px] leading-none text-[#222] [clip-path:polygon(4px_0,100%_0,calc(100%-4px)_100%,0_100%)]">
              {t}
            </div>
          ))}
        </div>

        {/* index bar */}
        <div className="flex h-[21px] shrink-0 items-center overflow-hidden whitespace-nowrap border-y border-[#7a0c0c]">
          <span className="ml-[1px] w-[23px] text-[15px] leading-none text-[#e8e8e8]">沪</span>
          <span className={`${num} w-[75px] text-[13px] text-[#e04048]`}>2425.86</span>
          <span className={`${num} w-[46px] text-[13px] text-[#e04048]`}>+6.61</span>
          <span className={`${num} w-[53px] text-[13px] text-[#e04048]`}>+0.27%</span>
          <span className={`${num} text-[13px] text-[#40d4e8]`}>1796.44</span>
          <span className="w-[15px] text-[15px] leading-none text-[#40d4e8]">亿</span>
          <span className="h-full w-[2px] border-l border-[#7a0c0c]" />
          <span className="w-[30px] text-[15px] leading-none text-[#e8e8e8]">深</span>
          <span className={`${num} w-[73px] text-[13px] text-[#e04048]`}>8211.96</span>
          <span className={`${num} w-[52px] text-[13px] text-[#e04048]`}>+13.39</span>
          <span className={`${num} w-[53px] text-[13px] text-[#e04048]`}>+0.16%</span>
          <span className={`${num} text-[13px] text-[#40d4e8]`}>1790.10</span>
          <span className="w-[15px] text-[15px] leading-none text-[#40d4e8]">亿</span>
          <span className="h-full w-[3px] border-l border-[#7a0c0c]" />
          <span className="w-[34px] text-[15px] leading-none text-[#e8e8e8]">创</span>
          <span className={`${num} w-[65px] text-[13px] text-[#e04048]`}>1532.52</span>
          <span className={`${num} w-[53px] text-[13px] text-[#e04048]`}>+20.03</span>
          <span className={`${num} w-[66px] text-[13px] text-[#e04048]`}>+1.32%</span>
          <span className={`${num} text-[13px] text-[#40d4e8]`}>340.72</span>
          <span className="w-[15px] text-[15px] leading-none text-[#40d4e8]">亿</span>
          <span className="h-full w-[3px] border-l border-[#7a0c0c]" />
          <span className="text-[15px] leading-none text-[#e8e8e8]">日经</span>
          <span className={`${num} w-[62px] text-[13px] text-[#e8e8c0]`}>225</span>
          <span className={`${num} w-[26px] text-[13px] text-[#30c030]`}>167</span>
          <div className="flex h-full w-[159px] shrink-0 items-center bg-[#e8e820] pl-[2px] text-[13px] leading-none text-[#c82020]">
            分析家公式网
            <span className="ml-[5px] font-['Liberation_Mono',monospace] text-[9px] font-bold">www.88gs.com</span>
          </div>
          <svg width="10" height="10" viewBox="0 0 10 10" className="ml-[11px]"><circle cx="5" cy="5" r="3.5" fill="none" stroke="#444" strokeWidth="2" /></svg>
        </div>

        {/* status bar */}
        <div className="flex h-[19px] shrink-0 items-center overflow-hidden whitespace-nowrap text-[12px] text-[#c8c8c8]">
          <span className="ml-[1px] h-full w-[31px] border-r border-[#7a0c0c] leading-[18px]">手机</span>
          <span className="h-full w-[32px] border-r border-[#7a0c0c] pl-[2px] leading-[18px]">留言</span>
          <span className="h-full w-[32px] border-r border-[#7a0c0c] pl-[2px] leading-[18px]">客服</span>
          <span className="h-full w-[31px] border-r border-[#7a0c0c] pl-[2px] leading-[18px]">解盘</span>
          <span className="h-full w-[58px] border-r border-[#7a0c0c] pl-[2px] leading-[18px]">股市日记</span>
          <span className="h-full w-[43px] border-r border-[#7a0c0c] pl-[1px] leading-[18px]">股灵通</span>
          <span className="h-full w-[32px] border-r border-[#7a0c0c] pl-[2px] leading-[18px]">行情</span>
          <span className="ml-[51px] w-[291px] text-[13px] font-bold leading-[18px] text-[#f0e830]">
            <span className="font-['Liberation_Sans',sans-serif]">23:18</span> 开盘：美股高开道指创历史新高
          </span>
          <span className="w-[212px] text-[13px] font-bold leading-[18px] text-[#f0e830]">
            <span className="font-['Liberation_Sans',sans-serif]">21:03</span> 关注欧央行议息会议 美股期指
          </span>
          <svg width="12" height="12" viewBox="0 0 12 12" className="ml-[213px]">
            <circle cx="5" cy="5" r="3.5" fill="none" stroke="#777" strokeWidth="1.6" />
            <path d="M8 8l3 3" stroke="#777" strokeWidth="2" />
          </svg>
          <span className="ml-[5px] h-full border-l border-[#7a0c0c]" />
          <span className={`${num} ml-[15px] text-[13px] text-[#c4c4c4]`}>00:35:37</span>
        </div>
      </div>

      {/* window shadow */}
      <div className="absolute left-[4px] top-[707px] h-[5px] w-[1122px] bg-gradient-to-b from-[#777] to-white" />
      <div className="absolute left-[1123px] top-[6px] h-[704px] w-[6px] bg-gradient-to-r from-[#777] to-white" />

      {/* site logo pasted over the toolbar */}
      <div className="absolute left-[934px] top-[2px] flex h-[55px] w-[199px] items-center bg-[#161616]/90">
        <svg width="56" height="55" viewBox="0 0 56 55" className="shrink-0">
          <ellipse cx="20" cy="15" rx="7" ry="12" fill="#3a98d8" transform="rotate(-25 20 15)" />
          <ellipse cx="34" cy="14" rx="6" ry="12" fill="#e8c820" transform="rotate(12 34 14)" />
          <ellipse cx="43" cy="26" rx="6" ry="12" fill="#a848a8" transform="rotate(75 43 26)" />
          <ellipse cx="36" cy="40" rx="7" ry="12" fill="#50b850" transform="rotate(-35 36 40)" />
          <ellipse cx="19" cy="42" rx="7" ry="12" fill="#e05868" transform="rotate(25 19 42)" />
          <ellipse cx="14" cy="27" rx="6" ry="12" fill="#70c8a8" transform="rotate(80 14 27)" />
          <circle cx="28" cy="28" r="5" fill="#d0d8c8" />
        </svg>
        <div className="ml-[3px] flex flex-col">
          <span className="whitespace-nowrap bg-gradient-to-b from-[#f8d840] to-[#d86818] bg-clip-text text-[22px] font-black italic leading-[28px] tracking-[0.3px] text-transparent">分析家公式网</span>
          <span className="whitespace-nowrap font-['Liberation_Sans',sans-serif] text-[18.5px] font-bold italic leading-[20px] text-[#f0e448]">www.88gs.com</span>
        </div>
      </div>
    </div>
  )
}
